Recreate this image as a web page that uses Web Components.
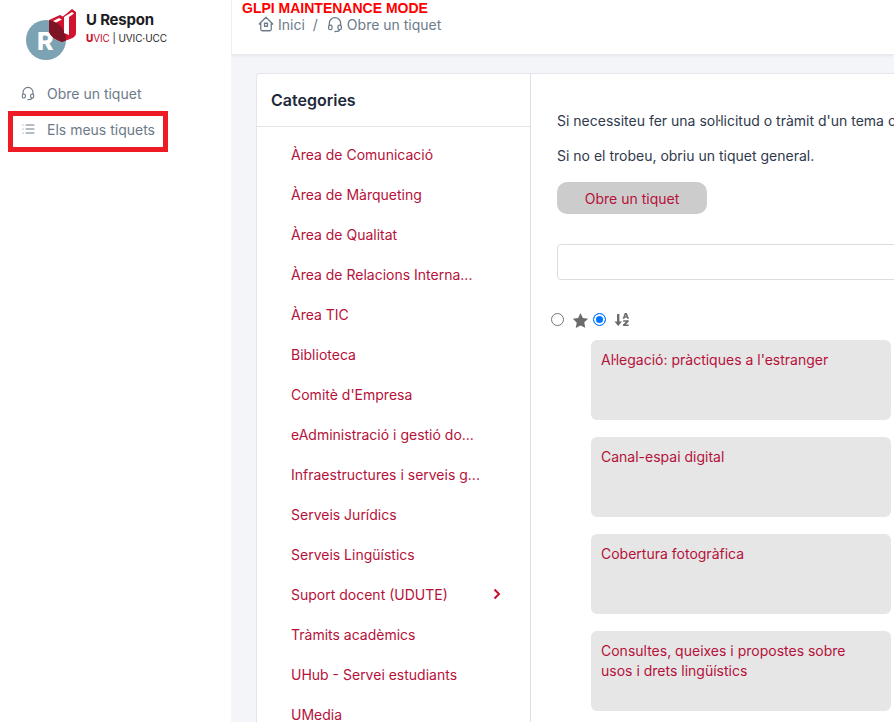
<!DOCTYPE html>
<html lang="ca">
<head>
<meta charset="utf-8">
<title>Obre un tiquet</title>
<style>
  html, body { margin: 0; height: 100%; overflow: hidden; }
  body { font-family: Inter, "Liberation Sans", sans-serif; font-size: 14px; background: #f4f5f8; }
</style>
</head>
<body>
<app-shell></app-shell>
<script>
const ICONS = {
  headset: '<path d="M4.500 14v-3a7.500 7.500 0 1 1 15 0v3"/><path d="M18 19.500c0 1.500-2.690 2.500-6 2.500"/><rect x="3.500" y="13.500" width="4.500" height="6" rx="2"/><rect x="16" y="13.500" width="4.500" height="6" rx="2"/>',
  list: '<path d="M9 6h12M9 12h12M9 18h12M4.500 6v.01M4.500 12v.01M4.500 18v.01"/>',
  home: '<path d="M5 12H3l9-9 9 9h-2"/><path d="M5 12v7a2 2 0 0 0 2 2h10a2 2 0 0 0 2-2v-7"/><rect x="10" y="11" width="4" height="4"/>'
};

function icon(name, size, width) {
  return `<svg width="${size}" height="${size}" viewBox="0 0 24 24" fill="none" stroke="currentColor" stroke-width="${width || 2}" stroke-linecap="round" stroke-linejoin="round">${ICONS[name]}</svg>`;
}

const U_SHAPE = 'M49 20L60 15l3 1.500L72 9l4 3v21q0 4-6 6l-8 3q-11-4-13-10z';

class AppLogo extends HTMLElement {
  constructor() {
    super();
    this.attachShadow({ mode: 'open' });
    this.shadowRoot.innerHTML = `
      <style>
        :host { display: flex; height: 70px; padding-left: 26px; gap: 10px; box-sizing: border-box; }
        svg { flex: none; margin-top: 9px; }
        .names { padding-top: 11px; }
        .name { font-size: 15px; font-weight: 700; color: #1d1d1f; line-height: 17px; letter-spacing: -.2px; }
        .sub { font-size: 10px; line-height: 12px; margin-top: 4px; color: #26282c; white-space: nowrap; letter-spacing: -.1px; }
        .sub b { color: #c8102e; font-weight: 800; }
        .sub span { color: #c8102e; }
      </style>
      <svg width="50" height="52" viewBox="26 9 50 52">
        <defs><clipPath id="disc"><circle cx="46" cy="40" r="20"/></clipPath></defs>
        <circle cx="46" cy="40" r="20" fill="#7ba3b3"/>
        <text x="37" y="50" font-family="Inter, sans-serif" font-size="25" font-weight="800" fill="#fff">R</text>
        <path d="${U_SHAPE}" fill="#d0142f"/>
        <path d="${U_SHAPE}" fill="#7d1526" clip-path="url(#disc)"/>
        <path d="M64 17l8-5 2 1.500-5 3.500v18l-5-2zM53 21l6-3 3 1.500-6 3z" fill="#fff"/>
      </svg>
      <div class="names">
        <div class="name">U Respon</div>
        <div class="sub"><b>U</b><span>VIC</span> | UVIC·UCC</div>
      </div>
    `;
  }
}
customElements.define('app-logo', AppLogo);

class NavItem extends HTMLElement {
  constructor() {
    super();
    this.attachShadow({ mode: 'open' });
    this.shadowRoot.innerHTML = `
      <style>
        :host { display: flex; align-items: center; height: 36px; padding-left: 20px; gap: 11px; color: #6c7a89; font-size: 14px; }
        svg { flex: none; }
      </style>
      ${icon(this.getAttribute('icon'), 16, 1.7)}
      <slot></slot>
    `;
  }
}
customElements.define('nav-item', NavItem);

class AppSidebar extends HTMLElement {
  constructor() {
    super();
    this.attachShadow({ mode: 'open' });
    this.shadowRoot.innerHTML = `
      <style>
        :host { display: block; flex: none; width: 231px; height: 100%; background: #fff; position: relative; box-sizing: border-box; }
        nav { display: flex; flex-direction: column; padding-top: 6px; margin-top: -1px; }
        .mark { position: absolute; left: 8px; top: 111px; width: 160px; height: 41px; box-sizing: border-box; border: 5px solid #ed1c24; }
      </style>
      <app-logo></app-logo>
      <nav>
        <nav-item icon="headset">Obre un tiquet</nav-item>
        <nav-item icon="list">Els meus tiquets</nav-item>
      </nav>
      <div class="mark"></div>
    `;
  }
}
customElements.define('app-sidebar', AppSidebar);

class AppHeader extends HTMLElement {
  constructor() {
    super();
    this.attachShadow({ mode: 'open' });
    this.shadowRoot.innerHTML = `
      <style>
        :host { display: block; flex: none; height: 54px; background: #fff; box-shadow: 0 1px 4px rgba(30,40,60,.1); box-sizing: border-box; padding-left: 10px; border-left: 1px solid #eceef2; color: #6c7a89; }
        .mode { color: #f00; font-family: "Liberation Sans", Arial, sans-serif; font-weight: 700; font-size: 14px; line-height: 16px; }
        .crumbs { display: flex; align-items: center; margin: -1px 0 0 15px; gap: 3px; height: 18px; }
        .sep { margin: 0 5px; }
        svg { flex: none; }
      </style>
      <div class="mode">GLPI MAINTENANCE MODE</div>
      <div class="crumbs">
        ${icon('home', 18, 1.7)}<span>Inici</span><span class="sep">/</span>${icon('headset', 18, 1.7)}<span>Obre un tiquet</span>
      </div>
    `;
  }
}
customElements.define('app-header', AppHeader);

class CategoryItem extends HTMLElement {
  constructor() {
    super();
    this.attachShadow({ mode: 'open' });
    this.shadowRoot.innerHTML = `
      <style>
        :host { display: flex; align-items: center; justify-content: space-between; height: 40px; padding: 0 29px 0 34px; color: #b5113a; font-size: 14px; white-space: nowrap; }
        .arrow { display: ${this.hasAttribute('more') ? 'block' : 'none'}; flex: none; }
      </style>
      <span><slot></slot></span>
      <svg class="arrow" width="8" height="12" viewBox="0 0 8 12" fill="none" stroke="#c8102e" stroke-width="2"><path d="M1.500 1.500L6 6l-4.500 4.500"/></svg>
    `;
  }
}
customElements.define('category-item', CategoryItem);

class CategoryList extends HTMLElement {
  constructor() {
    super();
    this.attachShadow({ mode: 'open' });
    this.shadowRoot.innerHTML = `
      <style>
        :host { display: block; flex: none; width: 274px; box-sizing: border-box; border-right: 1px solid #dcdfe4; }
        h2 { margin: 0; height: 53px; display: flex; align-items: center; padding-left: 14px; font-size: 16px; font-weight: 600; color: #1e293b; border-bottom: 1px solid #e2e4e8; box-sizing: border-box; }
        .items { padding-top: 7px; }
      </style>
      <h2>Categories</h2>
      <div class="items"><slot></slot></div>
    `;
  }
}
customElements.define('category-list', CategoryList);

class FormCard extends HTMLElement {
  constructor() {
    super();
    this.attachShadow({ mode: 'open' });
    this.shadowRoot.innerHTML = `
      <style>
        :host { display: block; box-sizing: border-box; width: 300px; height: 80px; padding: 10px 30px 10px 10px; background: #e6e6e6; border-radius: 6px; color: #b5113a; font-size: 14px; line-height: 20px; }
      </style>
      <slot></slot>
    `;
  }
}
customElements.define('form-card', FormCard);

class AppContent extends HTMLElement {
  constructor() {
    super();
    this.attachShadow({ mode: 'open' });
    this.shadowRoot.innerHTML = `
      <style>
        :host { display: block; flex: 1; min-width: 0; overflow: hidden; padding-top: 38px; color: #2f3a4c; }
        p { margin: 0 0 17px; height: 18px; line-height: 18px; white-space: nowrap; padding-left: 26px; }
        .btn { display: flex; align-items: center; justify-content: center; box-sizing: border-box; width: 150px; height: 32px; margin: 0 0 30px 26px; background: #ccc; border-radius: 10px; color: #b5113a; }
        .search { box-sizing: border-box; height: 36px; margin-left: 26px; width: 400px; background: #fff; border: 1px solid #dadce1; border-radius: 4px; }
        .sort { display: flex; align-items: center; margin: 29px 0 0 20px; height: 20px; }
        .radio { flex: none; box-sizing: border-box; width: 13px; height: 13px; border-radius: 50%; border: 1px solid #767676; background: #fff; }
        .radio.on { border: 1px solid #0075ff; box-shadow: inset 0 0 0 2px #fff; background: #0075ff; }
        .cards { display: flex; flex-direction: column; gap: 17px; margin: 11px 0 0 60px; }
      </style>
      <p>Si necessiteu fer una sol·licitud o tràmit d'un tema concret, cerqueu-lo a les categories.</p>
      <p>Si no el trobeu, obriu un tiquet general.</p>
      <div class="btn">Obre un tiquet</div>
      <div class="search"></div>
      <div class="sort">
        <span class="radio"></span>
        <svg style="margin-left:8px;margin-top:2px" width="17" height="17" viewBox="0 0 24 24" fill="#6b6b6b"><path d="M12 1.500l3.300 6.900 7.500 1-5.500 5.200 1.400 7.500L12 18.900 5.300 22.600l1.400-7.500L1.200 9.400l7.500-1z"/></svg>
        <span class="radio on" style="margin-left:4px"></span>
        <svg style="margin-left:8px;margin-top:1px" width="15" height="15" viewBox="0 0 15 15" fill="#6b6b6b"><path d="M3 2h2.400v7.500H8L4.200 14 .5 9.500H3z"/><path d="M8.600 6.800L10.800 1h2l2.200 5.800h-1.800l-.3-1h-2.200l-.3 1zM11.200 4.400h1.200l-.6-1.700zM9.200 8.200h5.500v1.500l-3 2.700h3V14H9v-1.500l3-2.700H9.200z"/></svg>
      </div>
      <div class="cards"><slot></slot></div>
    `;
  }
}
customElements.define('app-content', AppContent);

class AppShell extends HTMLElement {
  constructor() {
    super();
    this.attachShadow({ mode: 'open' });
    this.shadowRoot.innerHTML = `
      <style>
        :host { display: flex; height: 722px; overflow: hidden; }
        .main { flex: 1; min-width: 0; display: flex; flex-direction: column; }
        .page { flex: 1; min-height: 0; padding: 19px 0 0 25px; overflow: hidden; }
        .card { display: flex; height: 900px; background: #fff; border: 1px solid #e3e5e9; border-right: none; border-radius: 4px 0 0 0; }
      </style>
      <app-sidebar></app-sidebar>
      <div class="main">
        <app-header></app-header>
        <div class="page">
          <div class="card">
            <category-list>
              <category-item>Àrea de Comunicació</category-item>
              <category-item>Àrea de Màrqueting</category-item>
              <category-item>Àrea de Qualitat</category-item>
              <category-item>Àrea de Relacions Interna...</category-item>
              <category-item>Àrea TIC</category-item>
              <category-item>Biblioteca</category-item>
              <category-item>Comitè d'Empresa</category-item>
              <category-item>eAdministració i gestió do...</category-item>
              <category-item>Infraestructures i serveis g...</category-item>
              <category-item>Serveis Jurídics</category-item>
              <category-item>Serveis Lingüístics</category-item>
              <category-item more>Suport docent (UDUTE)</category-item>
              <category-item>Tràmits acadèmics</category-item>
              <category-item>UHub - Servei estudiants</category-item>
              <category-item>UMedia</category-item>
            </category-list>
            <app-content>
              <form-card>Al·legació: pràctiques a l'estranger</form-card>
              <form-card>Canal-espai digital</form-card>
              <form-card>Cobertura fotogràfica</form-card>
              <form-card>Consultes, queixes i propostes sobre usos i drets lingüístics</form-card>
            </app-content>
          </div>
        </div>
      </div>
    `;
  }
}
customElements.define('app-shell', AppShell);
</script>
</body>
</html>
